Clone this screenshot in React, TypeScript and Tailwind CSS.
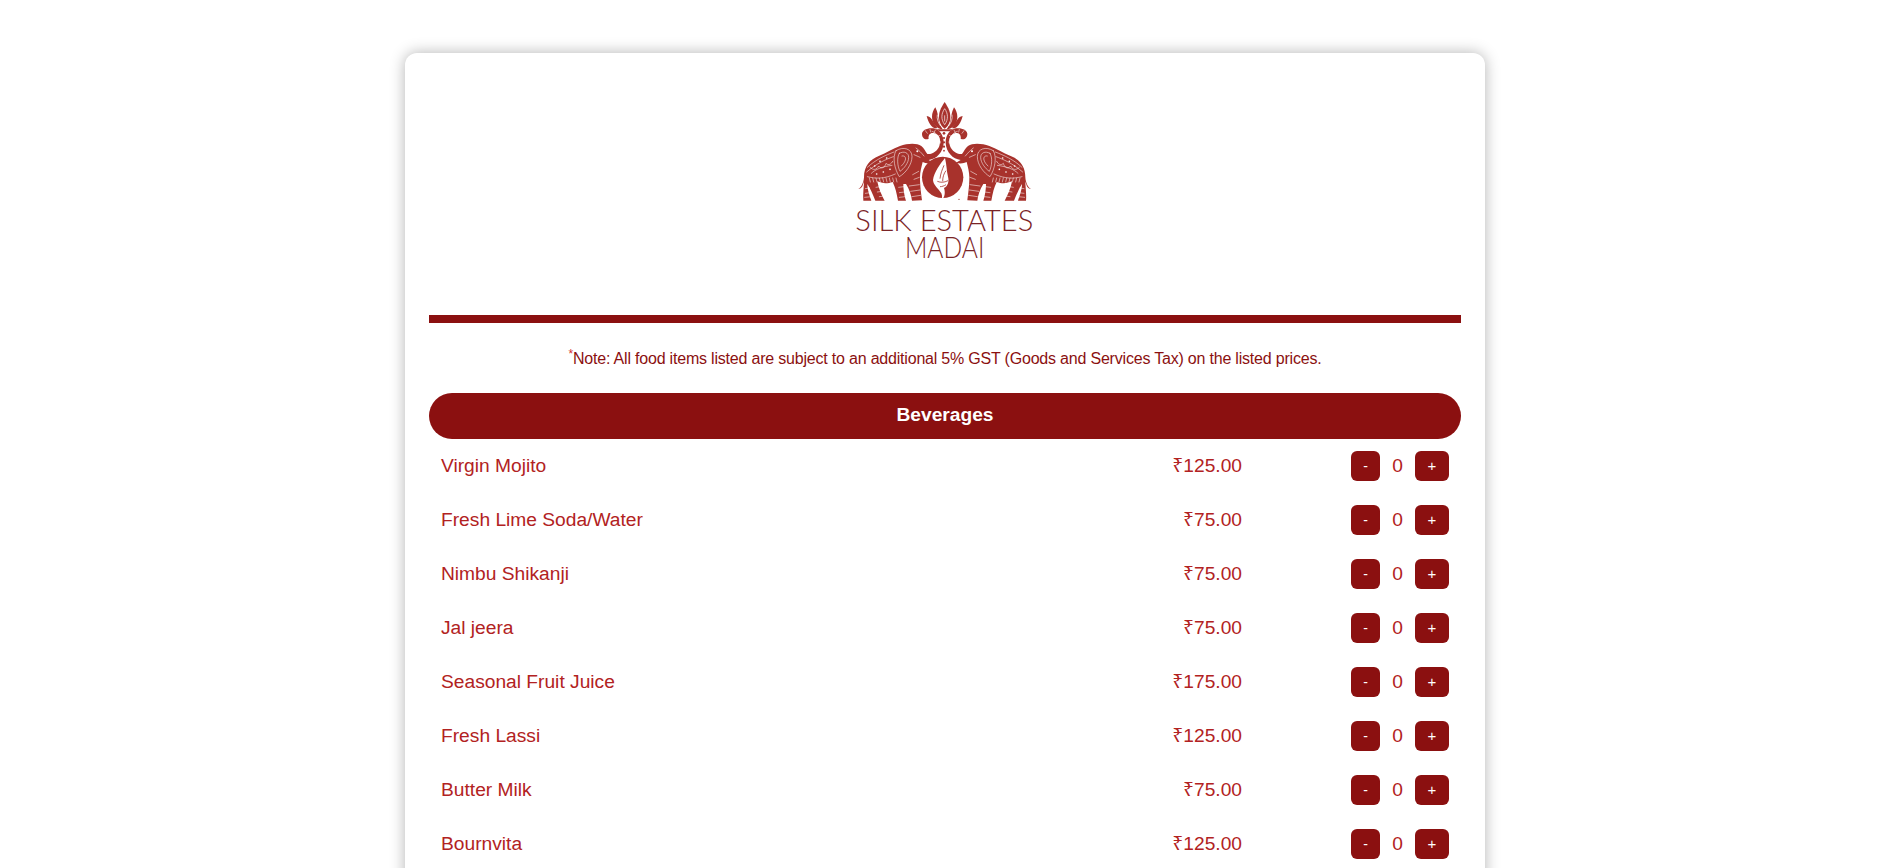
const items = [
  { name: "Virgin Mojito", price: "125.00" },
  { name: "Fresh Lime Soda/Water", price: "75.00" },
  { name: "Nimbu Shikanji", price: "75.00" },
  { name: "Jal jeera", price: "75.00" },
  { name: "Seasonal Fruit Juice", price: "175.00" },
  { name: "Fresh Lassi", price: "125.00" },
  { name: "Butter Milk", price: "75.00" },
  { name: "Bournvita", price: "125.00" },
];

const fringe = [148, 158, 168, 178, 188, 198, 208, 218, 228];

const Elephant = () => (
  <g>
    <path
      fill="#a8322c"
      d="M115 327 C124 322 131 308 132 292 C132 258 150 238 176 228 C200 218 218 206 240 198 C262 190 290 188 304 198 C312 204 316 214 322 222 C336 224 352 214 358 198 C364 180 358 164 344 160 C332 156 324 164 326 176 C316 182 306 174 306 162 C306 150 322 143 340 145 C358 147 372 166 371 190 C369 216 350 238 326 240 L340 248 C328 252 316 250 308 246 C304 262 300 276 300 292 C300 320 304 345 306 361 L276 362 C274 346 268 328 258 312 L250 312 C250 330 254 350 258 362 L234 362 C230 340 226 322 218 306 C200 312 186 310 172 304 C176 326 186 348 194 362 L166 362 C158 342 150 324 142 312 C142 330 150 350 154 362 L130 362 C128 342 132 320 132 304 C128 318 126 326 115 327 Z"
    />
    <g fill="none" stroke="#fff" strokeLinecap="round" strokeWidth="1.6">
      <path d="M228 212 C250 198 276 206 276 230 C276 254 256 280 238 290 C224 268 216 232 228 212 Z" />
      <path d="M238 220 C252 212 266 218 266 232 C266 248 252 266 240 274 C232 258 230 232 238 220 Z" />
      <path d="M246 228 C254 226 258 232 256 240 C254 248 248 254 244 258" />
      <path d="M142 262 C168 238 196 226 222 216" />
      <path d="M140 276 C170 250 198 238 220 230" />
      <path d="M142 290 C166 296 190 298 226 282" />
      <path d="M150 262 C160 272 170 270 176 258 C184 268 194 264 198 250 C206 258 214 252 218 244" />
      <path d="M154 280 C166 268 186 260 216 256" />
      <path d="M288 204 C296 210 304 218 312 228" />
      <path d="M282 224 L300 232 M336 154 C350 158 360 172 360 190" />
      <path d="M316 152 L322 160 M330 148 L332 156 M346 150 L342 158 M360 166 L352 170 M362 186 L354 186" />
      {fringe.map((x) => (
        <path key={x} d={`M${x} 294 L${x + 3} 306`} />
      ))}
      <path d="M136 326 L148 324 M136 340 L152 338 M134 352 L154 350" />
      <path d="M168 322 L180 320 M172 336 L186 334 M178 350 L192 348" />
      <path d="M236 322 L252 320 M238 338 L254 336 M238 352 L256 350" />
      <path d="M268 318 L298 314 M272 334 L300 330 M276 350 L302 346" />
      <path d="M278 284 L296 274 M282 298 L298 292" />
    </g>
    <g fill="#fff">
      <circle cx="292" cy="214" r="3" />
      <circle cx="180" cy="244" r="2.5" />
      <circle cx="200" cy="234" r="2.5" />
      <circle cx="164" cy="258" r="2.5" />
      <circle cx="190" cy="276" r="2.5" />
      <circle cx="210" cy="268" r="2.5" />
      <circle cx="170" cy="282" r="2.5" />
    </g>
  </g>
);

const Logo = () => (
  <svg viewBox="0 0 750 600" className="block w-[250px] h-[200px] mx-auto">
    <Elephant />
    <g transform="translate(748 0) scale(-1 1)">
      <Elephant />
    </g>
    <circle cx="368" cy="292" r="62" fill="#a8322c" />
    <path
      fill="#fff"
      d="M375 234 C362 250 342 276 339 300 C340 316 356 326 364 340 C368 350 366 358 362 364 C376 352 376 336 372 324 C384 318 388 304 384 290 C380 274 380 254 375 234 Z"
    />
    <path
      fill="none"
      stroke="#a8322c"
      strokeWidth="2.4"
      d="M372 256 C366 270 362 280 360 296 M378 272 C372 280 368 290 368 304 M352 304 C362 308 372 308 384 302 M360 320 C366 320 372 318 378 314"
    />
    <circle cx="417" cy="358" r="2" fill="#a8322c" />
    <g fill="#a8322c">
      <circle cx="372" cy="160" r="4" />
      <circle cx="372" cy="174" r="3.2" />
      <circle cx="372" cy="187" r="3.2" />
      <circle cx="372" cy="200" r="3.2" />
      <circle cx="372" cy="212" r="2.6" />
      <path d="M374 66 C386 84 394 100 390 122 C386 136 380 142 374 146 C368 142 362 136 358 122 C354 100 362 84 374 66 Z" />
      <path d="M346 82 C354 96 354 112 358 130 C362 140 366 144 368 148 C350 146 336 132 336 110 C336 100 340 90 346 82 Z" />
      <path d="M402 82 C394 96 394 112 390 130 C386 140 382 144 380 148 C398 146 412 132 412 110 C412 100 408 90 402 82 Z" />
      <path d="M320 108 C336 110 338 126 352 144 C336 148 326 130 320 108 Z" />
      <path d="M428 108 C412 110 410 126 396 144 C412 148 422 130 428 108 Z" />
      <path d="M350 148 L398 148 L390 154 L358 154 Z" />
    </g>
    <path
      fill="none"
      stroke="#fff"
      strokeWidth="2"
      d="M374 86 C384 100 386 118 374 134 C362 118 364 100 374 86 Z M374 106 L374 124 M352 104 C350 116 354 128 362 138 M396 104 C398 116 394 128 386 138"
    />
    <text
      x="106"
      y="453"
      textLength="534"
      lengthAdjust="spacingAndGlyphs"
      fill="#7a2326"
      className="font-['Lato',sans-serif] font-light text-[86px]"
    >
      SILK ESTATES
    </text>
    <text
      x="255"
      y="534"
      textLength="238"
      lengthAdjust="spacingAndGlyphs"
      fill="#7a2326"
      className="font-['Lato',sans-serif] font-light text-[86px]"
    >
      MADAI
    </text>
  </svg>
);

const MenuRow = ({ name, price }: { name: string; price: string }) => (
  <div className="flex items-center h-[54px] px-3 text-[19.2px] text-[#b22222]">
    <span className="flex-1">{name}</span>
    <span className="text-right">
      <span className="font-['Noto_Sans',sans-serif]">₹</span>
      {price}
    </span>
    <div className="flex items-center ml-[109px]">
      <button className="w-[29px] h-[30px] rounded-md bg-[#8b1010] text-white text-sm">-</button>
      <span className="w-[35px] text-center">0</span>
      <button className="w-[34px] h-[30px] rounded-md bg-[#8b1010] text-white text-[15px]">+</button>
    </div>
  </div>
);

const App = () => {
  return (
    <div className="min-h-screen bg-white pt-[53px] pr-[2px] font-['Liberation_Sans',sans-serif]">
      <div className="w-[1080px] mx-auto bg-white rounded-xl shadow-[0_0_15px_rgba(0,0,0,0.3)] px-6 pt-[27px] pb-6">
        <Logo />
        <div className="h-2 mt-[35px] bg-[#8b1010]"></div>
        <p className="mt-6 mb-[22px] text-center text-base tracking-[-0.2px] leading-6 text-[#8b1010]">
          <sup className="text-[#d32f2f]">*</sup>
          Note: All food items listed are subject to an additional 5% GST (Goods and Services Tax) on the listed prices.
        </p>
        <div className="h-[46px] pb-[2px] flex items-center justify-center rounded-full bg-[#8b1010] text-white text-[19.2px] font-bold">
          Beverages
        </div>
        {items.map((item) => (
          <MenuRow key={item.name} name={item.name} price={item.price} />
        ))}
      </div>
    </div>
  );
};

export default App;
